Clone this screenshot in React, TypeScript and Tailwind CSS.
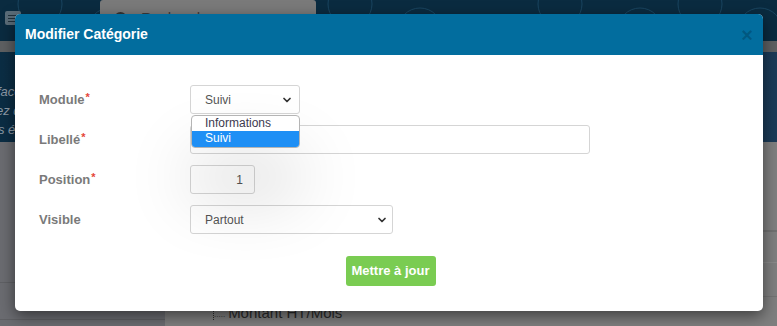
import { ChevronDown } from "lucide-react";

const FIELD = "h-[29px] rounded-[3px] border border-[#d5d5d5] bg-white text-[12px] text-[#555]";

function Label({ text, required }: { text: string; required?: boolean }) {
  return (
    <div className="w-[151px] shrink-0 text-[13px] font-bold text-[#7a7a7a]">
      {text}
      {required && <span className="relative -top-[3px] ml-[1px] text-[11px] text-[#e5463a]">*</span>}
    </div>
  );
}

function Chevron() {
  return <ChevronDown className="h-[12px] w-[12px] text-[#333]" strokeWidth={3.5} />;
}

export default function App() {
  return (
    <div className="relative h-[326px] w-[777px] overflow-hidden bg-[#7f7f7f] font-['Liberation_Sans',Arial,sans-serif]">
      {/* page behind the backdrop */}
      <header className="relative flex h-[41px] items-start overflow-hidden bg-[#0a2b40]">
        <svg className="absolute inset-0 h-full w-full" viewBox="0 0 777 41" fill="none">
          {[40, 110, 350, 420, 560, 640, 700, 760].map((cx, i) => (
            <circle key={i} cx={cx} cy={i % 2 ? 30 : 4} r={22} stroke="#1a4560" strokeWidth="1" />
          ))}
        </svg>
        <div className="relative ml-[5px] mt-[11px] flex h-[14px] w-[16px] flex-col justify-center gap-[2px] rounded-[2px] bg-[#5b6d79] px-[3px]">
          <span className="h-[1px] bg-[#22323c]" />
          <span className="h-[1px] bg-[#22323c]" />
          <span className="h-[1px] bg-[#22323c]" />
        </div>
        <div className="relative ml-[79px] flex h-[36px] w-[216px] items-center gap-[14px] rounded-[3px] bg-[#7a7a7a] pl-[14px] text-[15px] text-[#3a3a3a]">
          <span className="h-[13px] w-[13px] rounded-full border-2 border-[#333]" />
          Recherche
        </div>
      </header>
      <div className="h-[11px] bg-[#5e6062]" />
      <div className="flex h-[90px] flex-col gap-[5px] bg-gradient-to-r from-[#0b2d44] to-[#1b3a57] pt-[33px] text-[13px] italic leading-[14px] text-[#8d9aa6]">
        <span className="-ml-[3px]">face</span>
        <span className="-ml-[4px]">ez d</span>
        <span className="-ml-[2px]">s éc</span>
      </div>
      <div className="flex h-[184px]">
        <aside className="flex w-[165px] flex-col bg-[#6b6c71]">
          <div className="h-[141px] border-b border-[#5f6064]" />
          <div className="h-[37px] border-b border-[#5f6064]" />
        </aside>
        <main className="flex flex-1 flex-col">
          <div className="h-[90px] border-b-2 border-[#717171]" />
          <div className="h-[31px] border-b border-[#8a8a8a]" />
          <div className="h-[34px] border-b border-[#737373]" />
          <div className="flex items-end gap-[3px] pl-[48px] pt-[8px] text-[15px] leading-none text-[#2b2b2b]">
            <span className="border-l border-dotted border-[#2b2b2b] pb-[1px] text-[8px] leading-[8px]">.....</span>
            Montant HT/Mois
          </div>
        </main>
      </div>

      {/* modal */}
      <div className="absolute left-[15px] top-[14px] flex h-[297px] w-[748px] flex-col rounded-[5px] bg-white shadow-[0_5px_15px_rgba(0,0,0,0.5)]">
        <div className="flex h-[41px] items-center justify-between rounded-t-[5px] bg-[#026d9e] pl-[10px] pr-[10px]">
          <h2 className="text-[14px] font-bold text-white">Modifier Catégorie</h2>
          <span className="text-[20px] font-bold leading-none text-black/20">×</span>
        </div>

        <div className="flex flex-col gap-[11px] pl-[24px] pt-[30px]">
          <div className="flex items-center">
            <Label text="Module" required />
            <div className="relative">
              <div className={`${FIELD} flex w-[110px] items-center justify-between border-[#4e6275] pl-[14px] pr-[6px]`}>
                Suivi
                <Chevron />
              </div>
              <ul className="absolute left-[1px] top-full z-10 mt-[1px] w-[109px] overflow-hidden rounded-[4px] border border-[#b5b5b5] bg-white text-[12px] leading-[15px] shadow-[0_45px_70px_rgba(0,0,0,0.2)]">
                <li className="pl-[13px] text-[#3d3a4f]">Informations</li>
                <li className="bg-[#1e8ff5] pb-[1px] pl-[13px] text-white">Suivi</li>
              </ul>
            </div>
          </div>

          <div className="flex items-center">
            <Label text="Libellé" required />
            <div className={`${FIELD} w-[400px]`} />
          </div>

          <div className="flex items-center">
            <Label text="Position" required />
            <div className={`${FIELD} flex w-[65px] items-center justify-end bg-[#fafafa] pr-[11px]`}>1</div>
          </div>

          <div className="flex items-center">
            <Label text="Visible" />
            <div className={`${FIELD} flex w-[203px] items-center justify-between pl-[14px] pr-[4px]`}>
              Partout
              <Chevron />
            </div>
          </div>
        </div>

        <div className="mt-[22px] flex justify-center pl-[3px]">
          <button className="h-[30px] w-[90px] rounded-[3px] bg-[#7acc52] font-['Liberation_Sans_Narrow','Liberation_Sans',Arial,sans-serif] text-[13px] font-bold text-white">
            Mettre à jour
          </button>
        </div>
      </div>
    </div>
  );
}
